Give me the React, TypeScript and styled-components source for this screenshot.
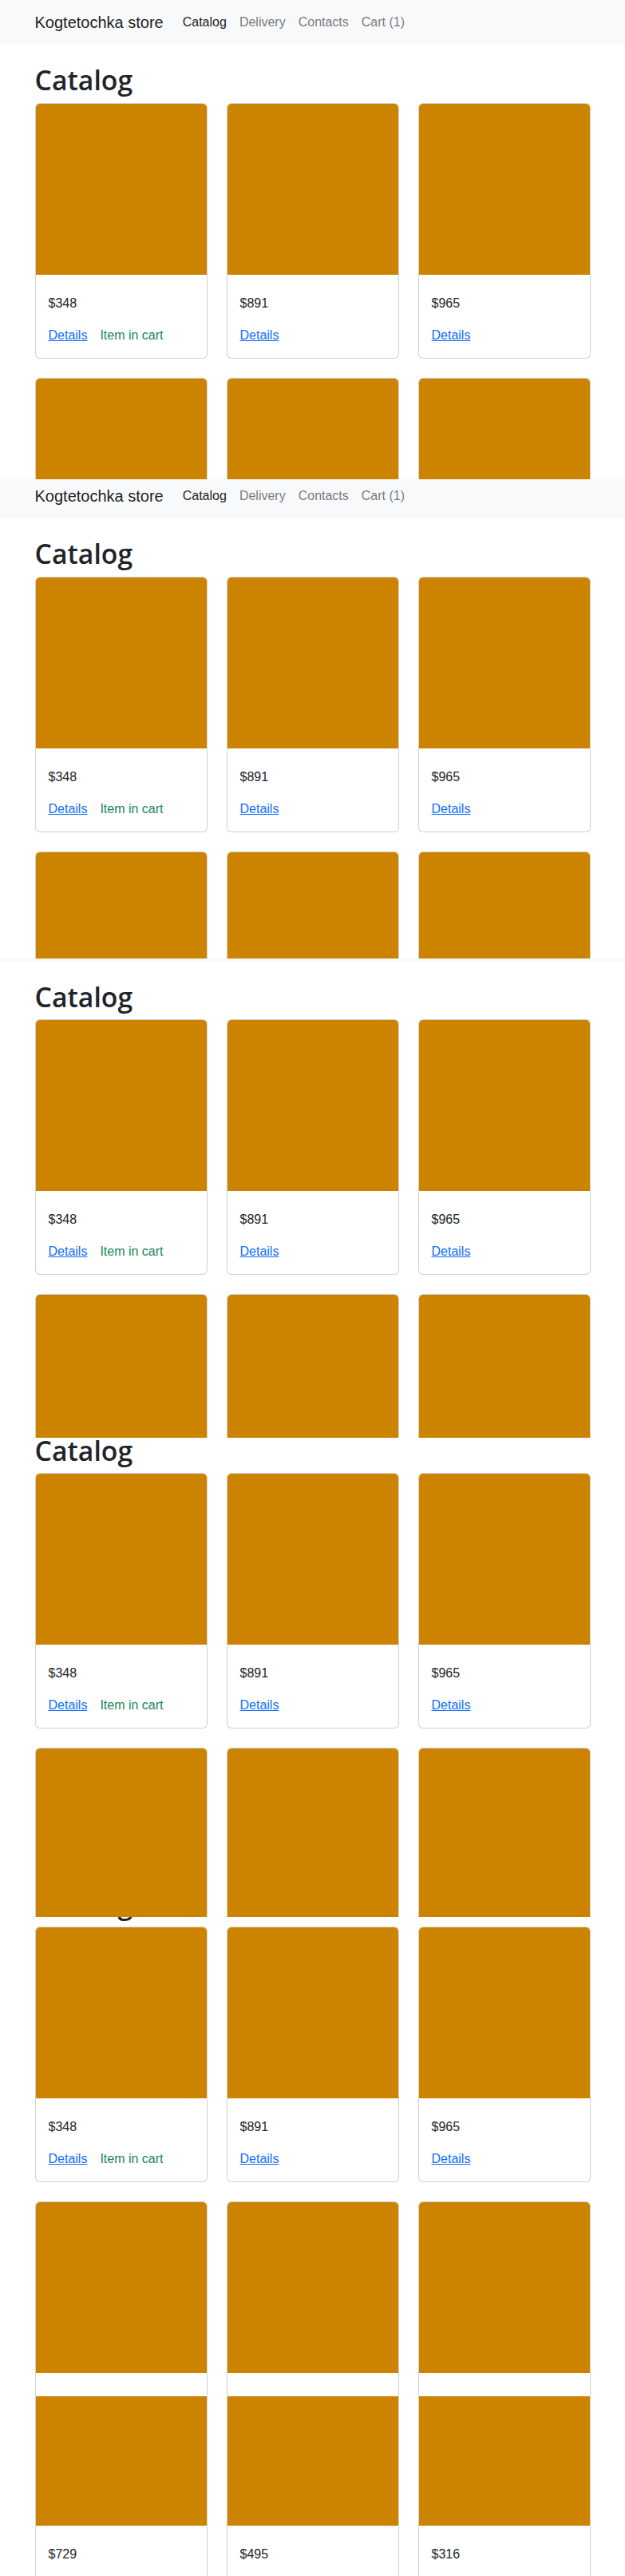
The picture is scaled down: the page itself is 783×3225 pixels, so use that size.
import React from 'react';
import styled, { createGlobalStyle } from 'styled-components';

const GlobalStyle = createGlobalStyle`
  * {
    box-sizing: border-box;
  }
  html,
  body {
    margin: 0;
    padding: 0;
    background: #fff;
  }
  body {
    font-family: 'Liberation Sans', Arial, sans-serif;
    font-size: 16px;
    line-height: 1.5;
    color: #212529;
  }
`;

// each frame is one captured viewport of the same scrolled page
const Frame = styled.div<{ $height: number }>`
  height: ${(p) => p.$height}px;
  overflow: hidden;
  background: #fff;
`;

const Page = styled.div<{ $scroll: number }>`
  margin-top: -${(p) => p.$scroll}px;
`;

const Container = styled.div`
  width: 720px;
  margin: 0 auto;
  padding: 0 12px;
`;

const Navbar = styled.nav`
  background: #f8f9fa;
  padding: 8px 0;
`;

const NavInner = styled(Container)`
  display: flex;
  align-items: center;
`;

const Brand = styled.a`
  font-size: 20px;
  line-height: 30px;
  padding: 5px 0;
  margin-right: 16px;
  color: rgba(0, 0, 0, 0.9);
  text-decoration: none;
  white-space: nowrap;
`;

const NavList = styled.ul`
  display: flex;
  list-style: none;
  margin: 0;
  padding: 0;
`;

const NavLink = styled.a<{ $active?: boolean }>`
  display: block;
  padding: 8px;
  line-height: 24px;
  color: ${(p) => (p.$active ? 'rgba(0, 0, 0, 0.9)' : 'rgba(0, 0, 0, 0.55)')};
  text-decoration: none;
`;

const Main = styled(Container)`
  padding-top: 24px;
`;

const Title = styled.h1`
  font-family: 'Open Sans', 'Liberation Sans', sans-serif;
  font-size: 33.75px;
  font-weight: 600;
  line-height: 1.2;
  margin: 0 0 8px;
  color: #212529;
`;

const Grid = styled.div`
  display: grid;
  grid-template-columns: repeat(3, 1fr);
  gap: 24px;
`;

const Card = styled.div`
  border: 1px solid rgba(0, 0, 0, 0.175);
  border-radius: 6px;
  overflow: hidden;
  background: #fff;
`;

const CardImage = styled.div`
  aspect-ratio: 1 / 1;
  background: #cc8400;
`;

const CardBody = styled.div`
  padding: 24px 16px 16px;
`;

const Price = styled.p`
  margin: 0 0 16px;
`;

const Actions = styled.div`
  display: flex;
  gap: 16px;
`;

const DetailsLink = styled.a`
  color: #0d6efd;
  text-decoration: underline;
`;

const InCart = styled.span`
  color: #198754;
`;

const products = [
  { id: 1, price: 348, inCart: true },
  { id: 2, price: 891 },
  { id: 3, price: 965 },
  { id: 4, price: 729 },
  { id: 5, price: 495 },
  { id: 6, price: 316 },
];

const frames = [
  { height: 600, scroll: 0 },
  { height: 600, scroll: 7 },
  { height: 600, scroll: 52.4 },
  { height: 600, scroll: 84.1 },
  { height: 600, scroll: 116.1 },
  { height: 225, scroll: 525.4 },
];

const StorePage = () => (
  <>
    <Navbar>
      <NavInner>
        <Brand href="#">Kogtetochka store</Brand>
        <NavList>
          <li>
            <NavLink href="#" $active>
              Catalog
            </NavLink>
          </li>
          <li>
            <NavLink href="#">Delivery</NavLink>
          </li>
          <li>
            <NavLink href="#">Contacts</NavLink>
          </li>
          <li>
            <NavLink href="#">Cart (1)</NavLink>
          </li>
        </NavList>
      </NavInner>
    </Navbar>
    <Main>
      <Title>Catalog</Title>
      <Grid>
        {products.map((item) => (
          <Card key={item.id}>
            <CardImage />
            <CardBody>
              <Price>${item.price}</Price>
              <Actions>
                <DetailsLink href="#">Details</DetailsLink>
                {item.inCart && <InCart>Item in cart</InCart>}
              </Actions>
            </CardBody>
          </Card>
        ))}
      </Grid>
    </Main>
  </>
);

export default function App() {
  return (
    <>
      <GlobalStyle />
      {frames.map((f, i) => (
        <Frame key={i} $height={f.height}>
          <Page $scroll={f.scroll}>
            <StorePage />
          </Page>
        </Frame>
      ))}
    </>
  );
}
